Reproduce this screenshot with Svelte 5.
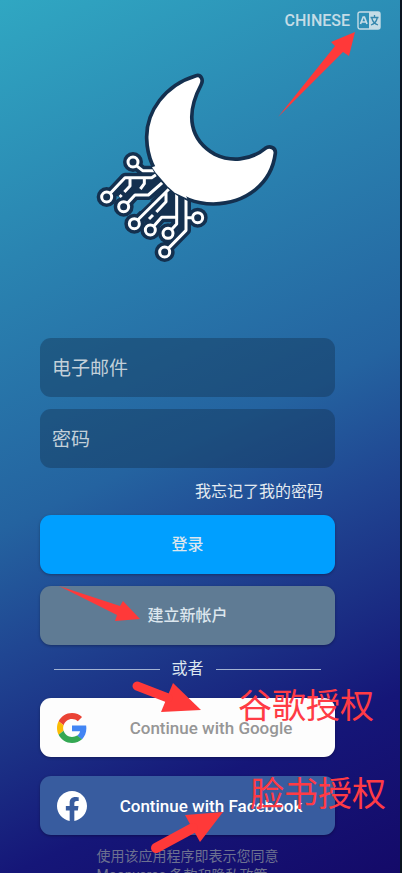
<script>
  let email = $state('');
  let password = $state('');
</script>

<main class="screen">
  <header>
    <button class="language" type="button">
      CHINESE
      <svg width="24" height="19" viewBox="0 0 24 19" aria-hidden="true">
        <rect x="1" y="1" width="22" height="17" rx="2" fill="none" stroke="currentColor" stroke-width="1.4" />
        <path d="M12 1h9a2 2 0 0 1 2 2v13a2 2 0 0 1-2 2h-9z" fill="currentColor" />
        <path d="M3.5 13 6.2 6h1.200L10 13M4.500 11h4.600" fill="none" stroke="currentColor" stroke-width="1.7" />
        <path d="M17.500 4v2.500M13.500 6.500h8M14.800 7c.6 3 3 5.800 6.200 7M20.200 7c-.6 3-3 5.800-6.200 7" fill="none" stroke="#3587ad" stroke-width="1.3" />
      </svg>
    </button>
  </header>

  <svg class="logo" width="200" height="210" viewBox="0 0 600 630" role="img" aria-label="Moon">
    <defs>
      <g id="circuit" fill="none" stroke-linejoin="round">
        <path d="M139 317 158 332H210M61 400 105 353H185L207 338M120 355V378L103 396M163 355V371L151 387M112 430 135 405H175L224 362M143 480 237 387M228 398V425L199 456M189 465 177 477M191 499 215 472H258M244 509 260 492V395M235 565 288 511V410M308 473H288M89 411 95 405" />
        <circle cx="129" cy="306" r="15" />
        <circle cx="50" cy="411" r="15" />
        <circle cx="101" cy="440" r="15" />
        <circle cx="133" cy="491" r="15" />
        <circle cx="181" cy="510" r="15" />
        <circle cx="234" cy="520" r="15" />
        <circle cx="224" cy="576" r="15" />
        <circle cx="323" cy="473" r="15" />
      </g>
    </defs>
    <use href="#circuit" stroke="#14304f" stroke-width="30" />
    <path d="M190 335 250 385 290 420V510L262 530V480H200L170 490 150 478 235 390 200 400 130 410 100 415 70 405 110 345Z" fill="#14304f" />
    <path d="M134 437 150 422H184L152 453 138 453Z" fill="#2a82ae" />
    <use href="#circuit" stroke="#fff" stroke-width="9" />
    <path d="M318 47C225 75 168 155 170 235C173 350 265 432 370 432C470 430 545 370 556 280C558 262 538 256 526 265C480 303 420 305 375 283C300 240 285 165 333 75C342 58 332 43 318 47Z" fill="#fff" stroke="#14304f" stroke-width="11" />
    <path d="M186 322 197 338 214 358 232 379 254 398 292 416 270 370 220 310Z" fill="#fff" />
  </svg>

  <form onsubmit={(e) => e.preventDefault()}>
    <input type="email" aria-label="电子邮件" placeholder="电子邮件" bind:value={email} />
    <input type="password" aria-label="密码" placeholder="密码" bind:value={password} />
    <a class="forgot" href="#forgot">我忘记了我的密码</a>
    <button class="primary" type="submit">登录</button>
    <button class="create" type="button">建立新帐户</button>
    <div class="divider"><span>或者</span></div>
    <button class="social google" type="button">
      <svg width="30" height="30" viewBox="0 0 48 48" aria-hidden="true">
        <path fill="#ea4335" d="M24 9.500c3.540 0 6.710 1.220 9.210 3.600l6.850-6.850C35.900 2.380 30.470 0 24 0 14.620 0 6.510 5.380 2.560 13.220l7.980 6.190C12.430 13.720 17.740 9.500 24 9.500z" />
        <path fill="#4285f4" d="M46.980 24.550c0-1.570-.15-3.090-.38-4.550H24v9.020h12.940c-.58 2.960-2.260 5.480-4.780 7.180l7.730 6c4.510-4.180 7.090-10.360 7.090-17.650z" />
        <path fill="#fbbc05" d="M10.530 28.590c-.48-1.450-.76-2.990-.76-4.590s.27-3.140.76-4.590l-7.980-6.190C.92 16.460 0 20.120 0 24s.92 7.540 2.560 10.780l7.970-6.190z" />
        <path fill="#34a853" d="M24 48c6.480 0 11.930-2.130 15.890-5.810l-7.730-6c-2.150 1.450-4.920 2.300-8.160 2.300-6.260 0-11.570-4.220-13.470-9.910l-7.980 6.190C6.510 42.620 14.620 48 24 48z" />
      </svg>
      <span>Continue with Google</span>
    </button>
    <button class="social facebook" type="button">
      <svg width="30" height="30" viewBox="0 0 24 24" aria-hidden="true">
        <path fill="#fff" d="M24 12.073C24 5.446 18.627.073 12 .073S0 5.446 0 12.073c0 5.990 4.388 10.954 10.125 11.854v-8.385H7.078v-3.470h3.047V9.430c0-3.007 1.792-4.669 4.533-4.669 1.312 0 2.686.235 2.686.235v2.953H15.830c-1.491 0-1.956.925-1.956 1.874v2.250h3.328l-.532 3.470h-2.796v8.385C19.612 23.027 24 18.062 24 12.073z" />
      </svg>
      <span>Continue with Facebook</span>
    </button>
    <p class="terms">使用该应用程序即表示您同意<br />Moonverse 条款和隐私政策</p>
  </form>

  <svg class="arrows" width="402" height="873" viewBox="0 0 402 873" aria-hidden="true">
    <g fill="#ff3939" stroke="#ff3939" stroke-width="0">
      <path d="M278 117 335 46 331 42 355 32 349 56 343 52Z" />
      <path d="M59 586 120 606 123 601 140 619 115 621 117 615Z" />
      <path d="M173 683 201 710 161 712Z" />
      <path d="M137 686 168 698" stroke-width="9" stroke-linecap="round" />
      <path d="M223 812 200 842 185 815Z" />
      <path d="M156 848 193 828" stroke-width="10" stroke-linecap="round" />
    </g>
  </svg>
  <span class="note note-google">谷歌授权</span>
  <span class="note note-facebook">脸书授权</span>
</main>

<style>
  :global(body) {
    margin: 0;
    background: #05071c;
  }

  .screen {
    position: relative;
    box-sizing: border-box;
    height: 100vh;
    overflow: hidden;
    border-right: 2px solid #0b1420;
    background: linear-gradient(155deg, #30a7c2 0%, #2a84b1 25%, #2463a0 50%, #204692 62%, #1b3085 72%, #151678 83%, #140a69 100%);
    font-family: Roboto, "Noto Sans CJK SC", sans-serif;
    color: #dce6ee;
  }

  button,
  input {
    box-sizing: border-box;
    border: 0;
    font: inherit;
    color: inherit;
  }

  header {
    display: flex;
    justify-content: flex-end;
    padding: 10px 19px 0 0;
  }

  .language {
    display: flex;
    align-items: center;
    gap: 7px;
    height: 20px;
    padding: 0;
    background: none;
    font-size: 16px;
    font-weight: 500;
    color: #c5dce6;
  }

  .logo {
    display: block;
    margin: 30px 0 0 90px;
  }

  form {
    display: flex;
    flex-direction: column;
    padding: 68px 65px 0 40px;
  }

  input {
    width: 100%;
    height: 59px;
    margin-bottom: 12px;
    padding: 2px 12px 0;
    border-radius: 11px;
    background: rgba(20, 50, 80, 0.42);
    font-size: 19px;
    outline: none;
  }

  input::placeholder {
    color: #c3d0d9;
    opacity: 1;
  }

  .forgot {
    align-self: flex-end;
    margin-right: 12px;
    font-size: 16px;
    line-height: 24px;
    color: #e3eaf0;
    text-decoration: none;
  }

  .primary,
  .create,
  .social {
    height: 59px;
    border-radius: 11px;
    font-size: 16px;
    font-weight: 500;
    box-shadow: 0 1px 3px rgba(0, 0, 0, 0.3);
  }

  .primary,
  .create {
    padding: 0 0 3px;
  }

  .primary {
    margin-top: 11px;
    background: #009fff;
  }

  .create {
    margin-top: 12px;
    background: #5f7b94;
  }

  .divider {
    display: flex;
    align-items: center;
    gap: 12px;
    margin: 12px 14px 17px;
    font-size: 16px;
    line-height: 24px;
  }

  .divider::before,
  .divider::after {
    content: "";
    flex: 1;
    height: 1px;
    background: #a3b3d2;
  }

  .social {
    display: flex;
    align-items: center;
    padding: 0 0 0 17px;
  }

  .social span {
    flex: 1;
    text-align: center;
  }

  .google {
    background: #fdfdfd;
    font-size: 17px;
    color: #969696;
  }

  .facebook {
    margin-top: 19px;
    background: #385c9f;
    font-size: 17px;
    color: #fff;
  }

  .terms {
    align-self: center;
    margin: 12px 0 0;
    font-size: 14px;
    line-height: 19px;
    color: #6d7190;
  }

  .arrows {
    position: absolute;
    top: 0;
    left: 0;
    pointer-events: none;
  }

  .note {
    position: absolute;
    font-size: 34px;
    line-height: 40px;
    color: #ff3b45;
    pointer-events: none;
  }

  .note-google {
    top: 686px;
    left: 238px;
  }

  .note-facebook {
    top: 774px;
    left: 250px;
  }
</style>
